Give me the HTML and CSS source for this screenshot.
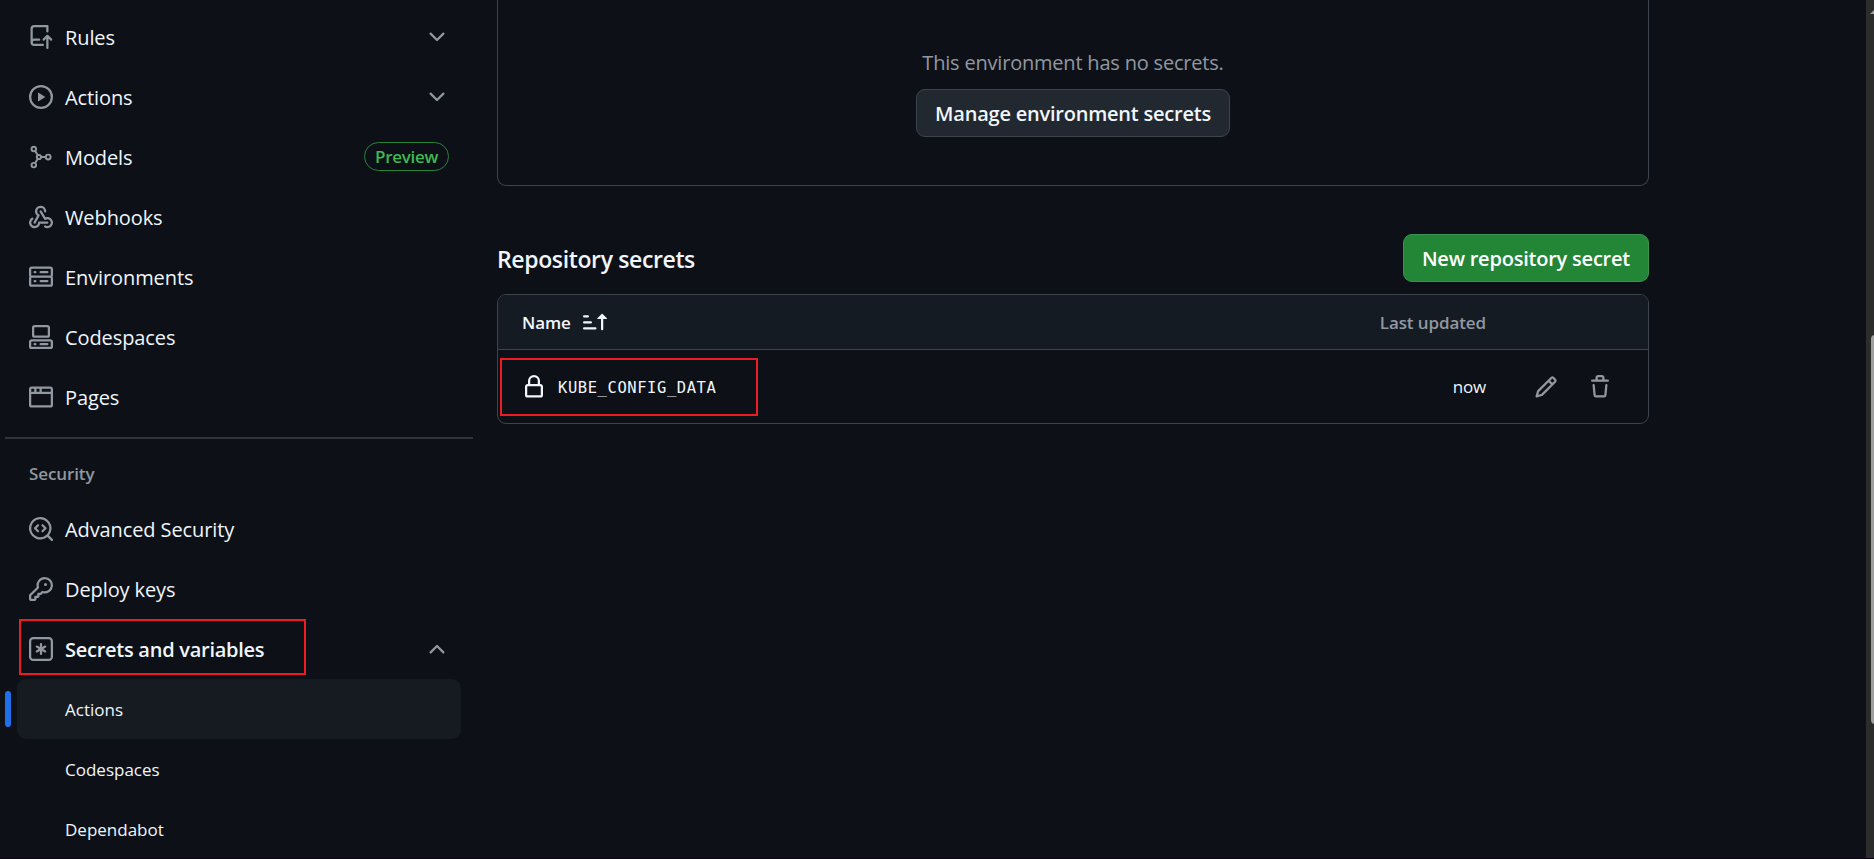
FILE: index.html
```
<!DOCTYPE html>
<html lang="en">
<head>
<meta charset="utf-8">
<title>Actions secrets</title>
<link rel="stylesheet" href="styles.css">
</head>
<body>
<div class="page">
  <aside class="sidebar">
    <ul class="nav">
      <li class="item">
        <svg class="icon" viewBox="0 0 16 16"><path d="M1 2.5A2.5 2.5 0 0 1 3.5 0h8.75a.75.75 0 0 1 .75.75v3.5a.75.75 0 0 1-1.5 0V1.5h-8a1 1 0 0 0-1 1v6.708A2.493 2.493 0 0 1 3.5 9h3.25a.75.75 0 0 1 0 1.5H3.5a1 1 0 0 0 0 2h5.75a.75.75 0 0 1 0 1.5H3.5A2.5 2.5 0 0 1 1 11.5Zm13.23 7.79h-.001l-1.224-1.224v6.184a.75.75 0 0 1-1.5 0V9.066L10.28 10.29a.75.75 0 0 1-1.06-1.061l2.505-2.504a.75.75 0 0 1 1.06 0L15.29 9.23a.751.751 0 0 1-.018 1.042.751.751 0 0 1-1.042.018Z"/></svg>
        <span class="label">Rules</span>
        <svg class="icon" viewBox="0 0 16 16"><path d="M12.78 5.22a.749.749 0 0 1 0 1.06l-4.25 4.25a.749.749 0 0 1-1.06 0L3.22 6.28a.749.749 0 1 1 1.06-1.06L8 8.939l3.72-3.719a.749.749 0 0 1 1.06 0Z"/></svg>
      </li>
      <li class="item">
        <svg class="icon" viewBox="0 0 16 16"><path d="M8 0a8 8 0 1 1 0 16A8 8 0 0 1 8 0ZM1.5 8a6.5 6.5 0 1 0 13 0 6.5 6.5 0 0 0-13 0Zm4.879-2.773 4.264 2.559a.25.25 0 0 1 0 .428l-4.264 2.559A.25.25 0 0 1 6 10.559V5.442a.25.25 0 0 1 .379-.215Z"/></svg>
        <span class="label">Actions</span>
        <svg class="icon" viewBox="0 0 16 16"><path d="M12.78 5.22a.749.749 0 0 1 0 1.06l-4.25 4.25a.749.749 0 0 1-1.06 0L3.22 6.28a.749.749 0 1 1 1.06-1.06L8 8.939l3.72-3.719a.749.749 0 0 1 1.06 0Z"/></svg>
      </li>
      <li class="item">
        <svg class="icon icon-line" viewBox="0 0 16 16"><circle cx="3.2" cy="2.6" r="1.5"/><circle cx="3.2" cy="13.4" r="1.5"/><circle cx="6.6" cy="8" r="1.4"/><circle cx="12.8" cy="8" r="1.6"/><path d="M4.1 4 5.8 6.7M4.1 12l1.7-2.7M8.1 8h3"/></svg>
        <span class="label">Models</span>
        <span class="badge">Preview</span>
      </li>
      <li class="item">
        <svg class="icon" viewBox="0 0 16 16"><path d="M5.5 4.25a2.25 2.25 0 0 1 4.5 0 .75.75 0 0 0 1.5 0 3.75 3.75 0 1 0-6.14 2.889l-2.272 4.258a.75.75 0 0 0 1.324.706L7 7.25a.75.75 0 0 0-.309-1.015A2.25 2.25 0 0 1 5.5 4.25Z"/><path d="M7.364 3.607a.75.75 0 0 1 1.03.257l2.608 4.349a3.75 3.75 0 1 1-.628 6.785.75.75 0 0 1 .752-1.299 2.25 2.25 0 1 0-.033-3.88.75.75 0 0 1-1.03-.256L7.107 4.636a.75.75 0 0 1 .257-1.03Z"/><path d="M2.9 8.776A.75.75 0 0 1 2.625 9.8 2.25 2.25 0 1 0 6 11.75a.75.75 0 0 1 .75-.751h5.5a.75.75 0 0 1 0 1.5H7.425a3.75 3.75 0 1 1-5.55-3.998.75.75 0 0 1 1.024.274Z"/></svg>
        <span class="label">Webhooks</span>
      </li>
      <li class="item">
        <svg class="icon" viewBox="0 0 16 16"><path d="M1.75 1h12.5c.966 0 1.75.784 1.75 1.75v4c0 .372-.116.717-.314 1 .198.283.314.628.314 1v4a1.75 1.75 0 0 1-1.75 1.75H1.75A1.75 1.75 0 0 1 0 12.75v-4c0-.358.109-.707.314-1a1.739 1.739 0 0 1-.314-1v-4C0 1.784.784 1 1.75 1ZM1.5 2.75v4c0 .138.112.25.25.25h12.5a.25.25 0 0 0 .25-.25v-4a.25.25 0 0 0-.25-.25H1.75a.25.25 0 0 0-.25.25Zm.25 5.75a.25.25 0 0 0-.25.25v4c0 .138.112.25.25.25h12.5a.25.25 0 0 0 .25-.25v-4a.25.25 0 0 0-.25-.25ZM7 4.75A.75.75 0 0 1 7.75 4h4.5a.75.75 0 0 1 0 1.5h-4.5A.75.75 0 0 1 7 4.75ZM7.75 10h4.5a.75.75 0 0 1 0 1.5h-4.5a.75.75 0 0 1 0-1.5ZM3 4.75A.75.75 0 0 1 3.75 4h.5a.75.75 0 0 1 0 1.5h-.5A.75.75 0 0 1 3 4.75ZM3.75 10h.5a.75.75 0 0 1 0 1.5h-.5a.75.75 0 0 1 0-1.5Z"/></svg>
        <span class="label">Environments</span>
      </li>
      <li class="item">
        <svg class="icon" viewBox="0 0 16 16"><path d="M0 11.25c0-.966.784-1.75 1.75-1.75h12.5c.966 0 1.75.784 1.75 1.75v3A1.75 1.75 0 0 1 14.25 16H1.75A1.75 1.75 0 0 1 0 14.25Zm2-9.5C2 .784 2.784 0 3.75 0h8.5C13.216 0 14 .784 14 1.75v5a1.75 1.75 0 0 1-1.75 1.75h-8.5A1.75 1.75 0 0 1 2 6.75Zm1.75-.25a.25.25 0 0 0-.25.25v5c0 .138.112.25.25.25h8.5a.25.25 0 0 0 .25-.25v-5a.25.25 0 0 0-.25-.25Zm-2 9.5a.25.25 0 0 0-.25.25v3c0 .138.112.25.25.25h12.5a.25.25 0 0 0 .25-.25v-3a.25.25 0 0 0-.25-.25Z"/><path d="M7 12.75a.75.75 0 0 1 .75-.75h4.5a.75.75 0 0 1 0 1.5h-4.5a.75.75 0 0 1-.75-.75Zm-4 0a.75.75 0 0 1 .75-.75h.5a.75.75 0 0 1 0 1.5h-.5a.75.75 0 0 1-.75-.75Z"/></svg>
        <span class="label">Codespaces</span>
      </li>
      <li class="item">
        <svg class="icon" viewBox="0 0 16 16"><path d="M0 2.75C0 1.784.784 1 1.75 1h12.5c.966 0 1.75.784 1.75 1.75v10.5A1.75 1.75 0 0 1 14.25 15H1.75A1.75 1.75 0 0 1 0 13.25ZM14.5 6h-13v7.25c0 .138.112.25.25.25h12.5a.25.25 0 0 0 .25-.25Zm-6-3.5v2h6V2.75a.25.25 0 0 0-.25-.25ZM5 2.5v2h2v-2Zm-3.25 0a.25.25 0 0 0-.25.25V4.5h2v-2Z"/></svg>
        <span class="label">Pages</span>
      </li>
    </ul>
    <hr class="divider">
    <h3 class="group-title">Security</h3>
    <ul class="nav">
      <li class="item">
        <svg class="icon" viewBox="0 0 16 16"><path d="M8.47 4.97a.75.75 0 0 0 0 1.06L9.94 7.5 8.47 8.97a.75.75 0 1 0 1.06 1.06l2-2a.75.75 0 0 0 0-1.06l-2-2a.75.75 0 0 0-1.06 0ZM6.53 6.03a.75.75 0 0 0-1.06-1.06l-2 2a.75.75 0 0 0 0 1.06l2 2a.75.75 0 1 0 1.06-1.06L5.06 7.5l1.47-1.47Z"/><path d="M12.246 13.307a7.501 7.501 0 1 1 1.06-1.06l2.474 2.473a.749.749 0 0 1-.326 1.275.749.749 0 0 1-.734-.215ZM1.5 7.5a6.002 6.002 0 0 0 3.608 5.504 6.002 6.002 0 0 0 6.486-1.117.748.748 0 0 1 .292-.293A6 6 0 1 0 1.5 7.5Z"/></svg>
        <span class="label">Advanced Security</span>
      </li>
      <li class="item">
        <svg class="icon" viewBox="0 0 16 16"><path d="M10.5 0a5.499 5.499 0 1 1-1.288 10.848l-.932.932a.749.749 0 0 1-.53.22H7v.75a.749.749 0 0 1-.22.53l-.5.5a.749.749 0 0 1-.53.22H5v.75a.749.749 0 0 1-.22.53l-.5.5a.749.749 0 0 1-.53.22h-2A1.75 1.75 0 0 1 0 14.25v-2c0-.199.079-.389.22-.53l4.932-4.932A5.5 5.5 0 0 1 10.5 0Zm-4 5.5c-.001.431.069.86.205 1.269a.75.75 0 0 1-.181.768L1.5 12.56v1.69c0 .138.112.25.25.25h1.69l.06-.06v-1.19a.75.75 0 0 1 .75-.75h1.19l.06-.06v-1.19a.75.75 0 0 1 .75-.75h1.19l1.023-1.025a.75.75 0 0 1 .768-.18A4 4 0 1 0 6.5 5.5ZM11 6a1 1 0 1 1 0-2 1 1 0 0 1 0 2Z"/></svg>
        <span class="label">Deploy keys</span>
      </li>
      <li class="item item-open">
        <svg class="icon" viewBox="0 0 16 16"><path d="M0 2.75A2.75 2.75 0 0 1 2.75 0h10.5A2.75 2.75 0 0 1 16 2.75v10.5A2.75 2.75 0 0 1 13.25 16H2.75A2.75 2.75 0 0 1 0 13.25ZM2.75 1.5c-.69 0-1.25.56-1.25 1.25v10.5c0 .69.56 1.25 1.25 1.25h10.5c.69 0 1.25-.56 1.25-1.25V2.75c0-.69-.56-1.25-1.25-1.25ZM8 4a.75.75 0 0 1 .75.75V6.7l1.69-.975a.75.75 0 0 1 .75 1.3L9.5 8l1.69.976a.75.75 0 0 1-.75 1.298L8.75 9.3v1.951a.75.75 0 0 1-1.5 0V9.299l-1.69.976a.75.75 0 0 1-.75-1.3L6.5 8l-1.69-.975a.75.75 0 0 1 .75-1.3l1.69.976V4.75A.75.75 0 0 1 8 4Z"/></svg>
        <span class="label">Secrets and variables</span>
        <svg class="icon icon-up" viewBox="0 0 16 16"><path d="M12.78 5.22a.749.749 0 0 1 0 1.06l-4.25 4.25a.749.749 0 0 1-1.06 0L3.22 6.28a.749.749 0 1 1 1.06-1.06L8 8.939l3.72-3.719a.749.749 0 0 1 1.06 0Z"/></svg>
        <span class="mark mark-nav"></span>
      </li>
      <li class="item subitem current">Actions</li>
      <li class="item subitem">Codespaces</li>
      <li class="item subitem">Dependabot</li>
    </ul>
  </aside>

  <main class="content">
    <section class="env-box">
      <p class="env-text">This environment has no secrets.</p>
      <button class="btn">Manage environment secrets</button>
    </section>
    <header class="section-head">
      <h2 class="section-title">Repository secrets</h2>
      <button class="btn btn-primary">New repository secret</button>
    </header>
    <section class="table">
      <div class="row row-head">
        <span class="col-name">Name
          <svg class="icon sort" viewBox="0 0 16 16"><path d="m12.927 2.573 3 3A.25.25 0 0 1 15.75 6H13.5v6.75a.75.75 0 0 1-1.5 0V6H9.75a.25.25 0 0 1-.177-.427l3-3a.25.25 0 0 1 .354 0ZM0 12.25a.75.75 0 0 1 .75-.75h7.5a.75.75 0 0 1 0 1.5H.75a.75.75 0 0 1-.75-.75Zm0-4a.75.75 0 0 1 .75-.75h4.5a.75.75 0 0 1 0 1.5H.75a.75.75 0 0 1-.75-.75Zm0-4a.75.75 0 0 1 .75-.75h2.5a.75.75 0 0 1 0 1.5H.75a.75.75 0 0 1-.75-.75Z"/></svg>
        </span>
        <span class="col-updated">Last updated</span>
      </div>
      <div class="row row-secret">
        <span class="col-name">
          <svg class="icon lock" viewBox="0 0 16 16"><path d="M4 4a4 4 0 0 1 8 0v2h.25c.966 0 1.75.784 1.75 1.75v5.5A1.75 1.75 0 0 1 12.25 15h-8.5A1.75 1.75 0 0 1 2 13.25v-5.5C2 6.784 2.784 6 3.75 6H4Zm8.25 3.5h-8.5a.25.25 0 0 0-.25.25v5.5c0 .138.112.25.25.25h8.5a.25.25 0 0 0 .25-.25v-5.5a.25.25 0 0 0-.25-.25ZM10.5 6V4a2.5 2.5 0 1 0-5 0v2Z"/></svg>
          <code class="secret">KUBE_CONFIG_DATA</code>
        </span>
        <span class="col-updated">now</span>
        <span class="tools">
          <svg class="icon" viewBox="0 0 16 16"><path d="M11.013 1.427a1.75 1.75 0 0 1 2.474 0l1.086 1.086a1.75 1.75 0 0 1 0 2.474l-8.61 8.61c-.21.21-.47.364-.756.445l-3.251.93a.75.75 0 0 1-.927-.928l.929-3.25c.081-.286.235-.547.445-.758l8.61-8.61Zm.176 4.823L9.75 4.81l-6.286 6.287a.253.253 0 0 0-.064.108l-.558 1.953 1.953-.558a.253.253 0 0 0 .108-.064Zm1.238-3.763a.25.25 0 0 0-.354 0L10.811 3.75l1.439 1.44 1.263-1.263a.25.25 0 0 0 0-.354Z"/></svg>
          <svg class="icon" viewBox="0 0 16 16"><path d="M11 1.75V3h2.25a.75.75 0 0 1 0 1.5H2.75a.75.75 0 0 1 0-1.5H5V1.75C5 .784 5.784 0 6.75 0h2.5C10.216 0 11 .784 11 1.75ZM4.496 6.675l.66 6.6a.25.25 0 0 0 .249.225h5.19a.25.25 0 0 0 .249-.225l.66-6.6a.75.75 0 0 1 1.492.149l-.66 6.6A1.748 1.748 0 0 1 10.595 15h-5.19a1.75 1.75 0 0 1-1.741-1.575l-.66-6.6a.75.75 0 1 1 1.492-.15ZM6.5 1.75V3h3V1.75a.25.25 0 0 0-.25-.25h-2.5a.25.25 0 0 0-.25.25Z"/></svg>
        </span>
        <span class="mark mark-secret"></span>
      </div>
    </section>
  </main>

  <div class="scrollbar"><span class="arrow"></span><span class="thumb"></span></div>
</div>
</body>
</html>
```

FILE: styles.css
```
* { box-sizing: border-box; }

body {
  margin: 0;
  background: #0d1117;
  color: #f0f6fc;
  font-family: "Open Sans", "Noto Sans", sans-serif;
  font-size: 20px;
  letter-spacing: -0.2px;
}

.page {
  display: flex;
  height: 859px;
  overflow: hidden;
  border-bottom: 1px solid #0b0410;
}

.sidebar {
  flex: none;
  width: 468px;
  margin-left: 5px;
  padding-top: 7px;
}

.nav {
  list-style: none;
  margin: 0 12px;
  padding: 0;
}

.item {
  position: relative;
  display: flex;
  align-items: center;
  gap: 12px;
  height: 60px;
  padding: 0 12px;
  border-radius: 9px;
}

.label {
  flex: 1;
  padding-top: 2px;
  letter-spacing: -0.1px;
  line-height: 30px;
  white-space: nowrap;
}

.icon {
  display: block;
  flex: none;
  width: 24px;
  height: 24px;
  fill: #9198a1;
}

.icon-line {
  fill: none;
  stroke: #9198a1;
  stroke-width: 1.3;
}

.icon-up { transform: scaleY(-1); }

.badge {
  height: 29px;
  margin-top: -1px;
  padding: 0 10px;
  border: 1px solid #238636;
  border-radius: 15px;
  color: #3fb950;
  font-size: 17px;
  font-weight: 600;
  letter-spacing: -0.3px;
  line-height: 27px;
}

.divider {
  height: 2px;
  margin: 10px 0 0;
  border: 0;
  background: #2f353d;
}

.group-title {
  margin: 21px 0 11px 24px;
  color: #9198a1;
  font-size: 17px;
  font-weight: 600;
  letter-spacing: -0.1px;
  line-height: 28px;
}

.item-open .label {
  font-weight: 600;
  letter-spacing: -0.26px;
}

.subitem {
  padding-left: 48px;
  font-size: 17px;
  letter-spacing: 0;
}

.current { background: #161b22; }

.current::before {
  content: "";
  position: absolute;
  left: -12px;
  top: 12px;
  width: 6px;
  height: 36px;
  border-radius: 3px;
  background: #1f6feb;
}

.mark {
  position: absolute;
  border: 2px solid #ed1c24;
}

.mark-nav {
  left: 2px;
  top: 0;
  width: 287px;
  height: 56px;
}

.content {
  flex: none;
  width: 1152px;
  margin-left: 24px;
}

.env-box {
  display: flex;
  flex-direction: column;
  align-items: center;
  height: 186px;
  padding-top: 48px;
  border: 1px solid #3d444d;
  border-top: 0;
  border-radius: 0 0 9px 9px;
}

.env-text {
  margin: 0 0 11px;
  color: #9198a1;
  line-height: 30px;
}

.btn {
  height: 48px;
  padding: 2px 18px 0;
  border: 1px solid #3d444d;
  border-radius: 9px;
  background: #212830;
  color: #f0f6fc;
  font: 600 20px/44px "Open Sans", "Noto Sans", sans-serif;
  letter-spacing: -0.22px;
  white-space: nowrap;
}

.btn-primary {
  border-color: #3a9350;
  background: #238636;
  color: #fff;
}

.section-head {
  display: flex;
  justify-content: space-between;
  align-items: center;
  margin: 48px 0 12px;
}

.section-title {
  margin: 0;
  padding-top: 2px;
  font-size: 23px;
  font-weight: 600;
  letter-spacing: -0.37px;
  line-height: 36px;
}

.table {
  border: 1px solid #3d444d;
  border-radius: 9px;
}

.row {
  position: relative;
  display: flex;
  align-items: center;
  padding-left: 24px;
  font-size: 17px;
}

.row-head {
  height: 55px;
  border-bottom: 1px solid #3d444d;
  border-radius: 8px 8px 0 0;
  background: #151b23;
  font-weight: 600;
  letter-spacing: -0.1px;
}

.row-secret { height: 73px; }

.col-name {
  display: flex;
  flex: none;
  align-items: center;
  width: 764px;
}

.sort { margin-left: 12px; fill: #f0f6fc; }

.lock { margin-right: 12px; fill: #f0f6fc; }

.col-updated {
  flex: none;
  width: 200px;
  text-align: right;
}

.row-head .col-updated { color: #9198a1; }

.secret {
  padding-top: 3px;
  font-family: "DejaVu Sans Mono", monospace;
  font-size: 15.5px;
  letter-spacing: 0.57px;
}

.tools {
  display: flex;
  gap: 30px;
  margin-left: 48px;
}

.mark-secret {
  left: 2px;
  top: 8px;
  width: 258px;
  height: 58px;
}

.scrollbar {
  flex: none;
  width: 8px;
  height: 859px;
  margin-left: 217px;
  padding: 9px 0 0 4px;
  overflow: hidden;
  background: #2c2c2c;
}

.arrow {
  display: block;
  width: 0;
  border: 5px solid transparent;
  border-top: 0;
  border-bottom: 5px solid #9f9f9f;
}

.thumb {
  display: block;
  width: 9px;
  height: 389px;
  margin: 321px 0 0 1px;
  border-radius: 4px;
  background: #9f9f9f;
}
```
